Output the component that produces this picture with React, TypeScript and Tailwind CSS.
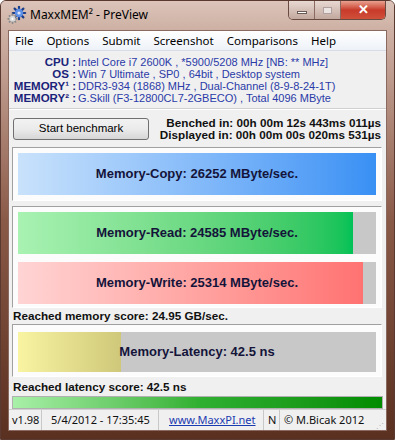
import React from 'react';

const info = [
  { label: 'CPU :', value: 'Intel Core i7 2600K , *5900/5208 MHz  [NB: ** MHz]' },
  { label: 'OS :', value: 'Win 7 Ultimate , SP0 , 64bit , Desktop system' },
  { label: 'MEMORY¹ :', value: 'DDR3-934 (1868) MHz , Dual-Channel (8-9-8-24-1T)' },
  { label: 'MEMORY² :', value: 'G.Skill (F3-12800CL7-2GBECO) , Total 4096 MByte' },
];

const menu = ['File', 'Options', 'Submit', 'Screenshot', 'Comparisons', 'Help'];

const uiFont = { fontFamily: "'Noto Sans', 'Open Sans', sans-serif" };

function GearIcon() {
  return (
    <svg width="20" height="18" viewBox="0 0 20 18">
      <g stroke="#1c3f8a" strokeWidth="2.2" strokeLinecap="round">
        <line x1="12" y1="0.8" x2="12" y2="13.2" />
        <line x1="5.8" y1="7" x2="18.2" y2="7" />
        <line x1="7.6" y1="2.6" x2="16.4" y2="11.4" />
        <line x1="16.4" y1="2.6" x2="7.6" y2="11.4" />
      </g>
      <circle cx="12" cy="7" r="4.2" fill="#5d8fe6" />
      <circle cx="12" cy="7" r="1.6" fill="#dfe8f8" />
      <g stroke="#8a8a8a" strokeWidth="1.8" strokeLinecap="round">
        <line x1="5.5" y1="8.5" x2="5.5" y2="17" />
        <line x1="1.2" y1="12.8" x2="9.8" y2="12.8" />
        <line x1="2.5" y1="9.8" x2="8.5" y2="15.8" />
        <line x1="8.5" y1="9.8" x2="2.5" y2="15.8" />
      </g>
      <circle cx="5.5" cy="12.8" r="3" fill="#d8d8d8" />
      <circle cx="5.5" cy="12.8" r="1.1" fill="#ffffff" />
    </svg>
  );
}

function Bar({ label, fill, pct }: { label: string; fill: string; pct: number }) {
  return (
    <div className="relative h-[42px] bg-[#c8c8c8]">
      <div className={`h-full ${fill}`} style={{ width: `${pct}%` }} />
      <div className="absolute inset-0 flex items-center justify-center text-[13px] font-bold text-[#14143a] whitespace-nowrap">
        {label}
      </div>
    </div>
  );
}

const panel =
  'ml-[3px] mr-[4px] bg-[#fcfcfc] border-t border-l border-[#a0a0a0] border-r border-b border-r-white border-b-white px-[5px]';

export default function App() {
  return (
    <div
      className="w-[395px] h-[440px] overflow-hidden rounded-t-[6px] border border-[#5a3a30] bg-gradient-to-b from-[#d9bfb4] via-[#8a5a48] to-[#5a3020] flex flex-col"
      style={{ fontFamily: "'Liberation Sans', Arial, sans-serif" }}
    >
      {/* Title bar */}
      <div className="h-[29px] flex items-start bg-gradient-to-b from-[#dcc4ba] to-[#cdb0a3] shrink-0">
        <div className="flex items-center h-[28px] pl-[6px] gap-[3px]">
          <GearIcon />
          <span className="text-[12px] text-black whitespace-nowrap" style={uiFont}>
            MaxxMEM² - PreView
          </span>
        </div>
        <div className="ml-auto mr-[8px] flex h-[19px] rounded-b-[5px] border border-t-0 border-[#6a4a40] overflow-hidden">
          <div className="w-[26px] flex items-center justify-center bg-gradient-to-b from-[#e8d8d2] to-[#c2a89e] border-r border-[#8a6a60]">
            <div className="w-[10px] h-[3px] bg-white border border-[#6a5a55] mt-[5px]" />
          </div>
          <div className="w-[26px] flex items-center justify-center bg-gradient-to-b from-[#e8d8d2] to-[#c2a89e] border-r border-[#8a6a60]">
            <div className="w-[9px] h-[7px] border border-[#b0a0a0] bg-[#ece4e0]" />
          </div>
          <div className="w-[44px] flex items-center justify-center bg-gradient-to-b from-[#e8a090] via-[#c83a2a] to-[#d0503a] text-white text-[13px] font-bold">
            ✕
          </div>
        </div>
      </div>

      {/* Client area */}
      <div className="mx-[7px] h-[401px] shrink-0 bg-[#f0f0f0] border border-[#8a6a60] flex flex-col text-[11px]">
        {/* Menu */}
        <div className="h-[20px] shrink-0 bg-gradient-to-b from-[#ffffff] to-[#eef2f8] border-b border-[#d8dce4] flex items-center gap-[13px] pl-[6px] text-[11.5px] text-black whitespace-nowrap" style={uiFont}>
          {menu.map((m) => (
            <span key={m}>{m}</span>
          ))}
        </div>

        {/* Info */}
        <div className="h-[58px] shrink-0 pt-[5px] border-b border-[#d0d0d0] flex flex-col leading-[12px]">
          {info.map((row) => (
            <div key={row.label} className="flex whitespace-nowrap">
              <span className="w-[69px] shrink-0 text-right font-bold text-[11.5px] text-[#1a237a] pr-[2px]">{row.label}</span>
              <span className="text-[#2a3aa8]">{row.value}</span>
            </div>
          ))}
        </div>

        {/* Button + times */}
        <div className="h-[38px] shrink-0 flex items-start pt-[8px] pl-[4px] pr-[5px] border-t border-white">
          <button className="w-[136px] h-[22px] rounded-[3px] border border-[#707070] bg-gradient-to-b from-[#f2f2f2] via-[#ebebeb] to-[#d6d6d6] text-[11.5px] text-black">
            Start benchmark
          </button>
          <div className="ml-auto -mt-[1px] flex flex-col items-end font-bold text-[11.7px] leading-[12px] text-[#111] whitespace-nowrap">
            <span>Benched in: 00h 00m 12s 443ms 011µs</span>
            <span>Displayed in: 00h 00m 00s 020ms 531µs</span>
          </div>
        </div>

        {/* Copy panel */}
        <div className={`${panel} h-[54px] shrink-0 pt-[5px]`}>
          <Bar label="Memory-Copy: 26252 MByte/sec." fill="bg-gradient-to-r from-[#c9e2fb] to-[#3890f4]" pct={100} />
        </div>

        {/* Read / Write panel */}
        <div className={`${panel} mt-[5px] h-[102px] shrink-0 pt-[5px] flex flex-col gap-[8px]`}>
          <Bar label="Memory-Read: 24585 MByte/sec." fill="bg-gradient-to-r from-[#a9f2b2] to-[#00c257]" pct={93.6} />
          <Bar label="Memory-Write: 25314 MByte/sec." fill="bg-gradient-to-r from-[#ffd4d4] to-[#ff7272]" pct={96.4} />
        </div>

        <div className="h-[16px] shrink-0 pl-[4px] flex items-center font-bold text-[11.7px] text-[#111] whitespace-nowrap">
          Reached memory score: 24.95 GB/sec.
        </div>

        {/* Latency panel */}
        <div className={`${panel} h-[53px] shrink-0 pt-[7px]`}>
          <div className="relative h-[40px] bg-[#c8c8c8]">
            <div className="h-full w-[103px] bg-gradient-to-r from-[#f8f4a2] to-[#cfc87a]" />
            <div className="absolute inset-0 flex items-center justify-center text-[13px] font-bold text-[#14143a] whitespace-nowrap">
              Memory-Latency: 42.5 ns
            </div>
          </div>
        </div>

        <div className="h-[19px] shrink-0 pl-[4px] flex items-center font-bold text-[11.7px] text-[#111] whitespace-nowrap">
          Reached latency score: 42.5 ns
        </div>

        {/* Score bar */}
        <div className="h-[13px] shrink-0 mx-[3px] border border-[#b0b0b0] bg-white">
          <div className="h-full bg-gradient-to-r from-[#a8f0a8] via-[#30b030] to-[#008c00]" />
        </div>

        {/* Status bar */}
        <div className="mt-auto h-[21px] shrink-0 flex items-center text-[11px] text-[#111] border-t border-[#d0d0d0] whitespace-nowrap" style={uiFont}>
          <span className="w-[33px] pl-[3px] border-r border-[#c8c8c8] h-full flex items-center">v1.98</span>
          <span className="w-[117px] pl-[9px] border-r border-[#c8c8c8] h-full flex items-center">5/4/2012 - 17:35:45</span>
          <span className="w-[105px] pl-[10px] border-r border-[#c8c8c8] h-full flex items-center text-[#1a3ab0] underline">www.MaxxPI.net</span>
          <span className="w-[16px] pl-[4px] border-r border-[#c8c8c8] h-full flex items-center">N</span>
          <span className="pl-[4px] h-full flex items-center">© M.Bicak 2012</span>
          <span className="ml-auto mr-[2px] self-end text-[8px] leading-[8px] text-[#b0b0b0] pb-[1px]">⋰</span>
        </div>
      </div>
    </div>
  );
}
